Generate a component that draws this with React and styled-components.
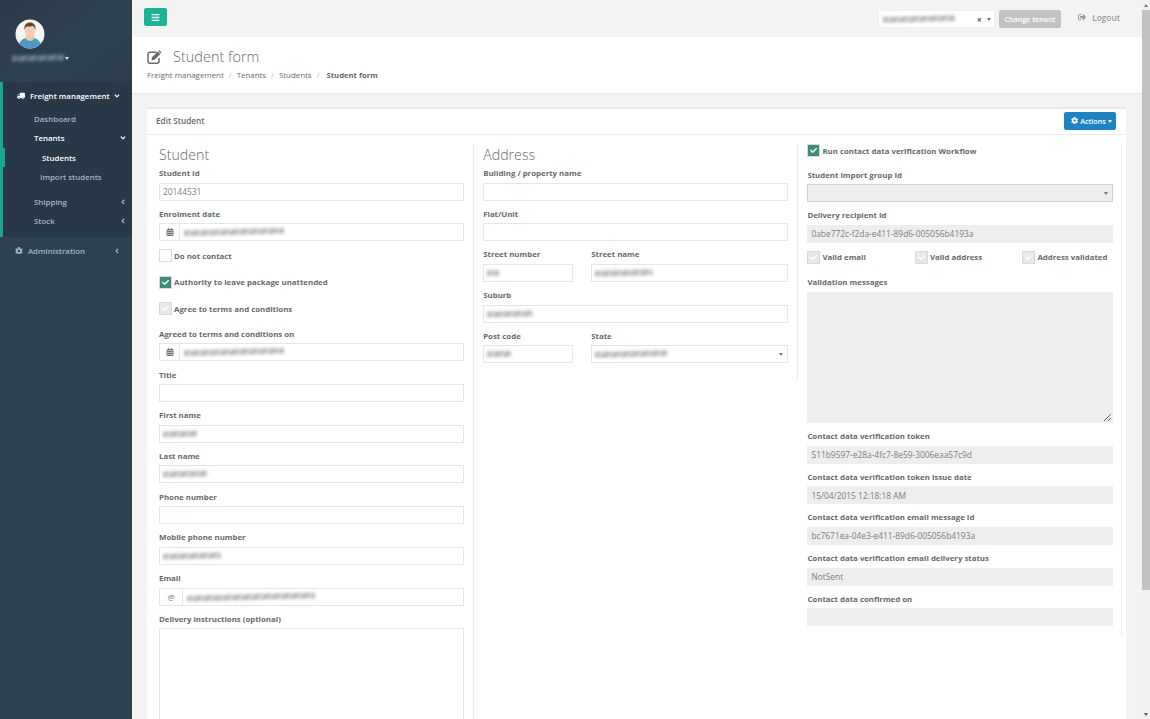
import React from "react";
import styled, { createGlobalStyle } from "styled-components";
import {
  FaAngleDown,
  FaAngleLeft,
  FaBars,
  FaCalendarAlt,
  FaCheck,
  FaCog,
  FaSignOutAlt,
  FaTruck,
} from "react-icons/fa";

const GlobalStyle = createGlobalStyle`
  html, body {
    margin: 0;
    height: 100%;
    overflow: hidden;
    background: #f3f3f4;
    font-family: "Open Sans", "Liberation Sans", sans-serif;
    font-size: 9px;
    color: #676a6c;
  }
  * { box-sizing: border-box; }
`;

const Shell = styled.div`
  display: flex;
  height: 719px;
  overflow: hidden;
`;

const Sidebar = styled.aside`
  width: 132px;
  flex: none;
  background: #2f4050;
`;

const Profile = styled.div`
  height: 82px;
  padding: 19px 0 0 15px;
  background: linear-gradient(145deg, #2a3947 0%, #2f4050 55%, #2c3c4b 100%);
`;

const ProfileName = styled.div`
  display: flex;
  align-items: center;
  gap: 1px;
  margin: 3px 0 0 -3px;
`;

const Smudge = styled.span`
  display: block;
  width: ${(p) => p.$w}px;
  height: 6px;
  flex: none;
  background: repeating-linear-gradient(
    125deg,
    ${(p) => p.$tone || "#bcbcbc"} 0 5px,
    ${(p) => p.$alt || "#d4d4d4"} 5px 8px
  );
  filter: blur(1.5px);
  transform: rotate(-1.5deg);
`;

const ActiveGroup = styled.div`
  background: #293846;
  border-left: 3px solid #19aa8d;
  height: 155px;
  padding-top: 4px;
`;

const NavRow = styled.div`
  display: flex;
  align-items: center;
  justify-content: space-between;
  height: ${(p) => p.$h || 19.3}px;
  margin-left: ${(p) => (p.$bar ? -3 : 0)}px;
  margin-bottom: ${(p) => p.$after || 0}px;
  padding: 0 ${(p) => p.$right ?? 5}px 0 ${(p) => (p.$bar ? p.$left + 3 : p.$left)}px;
  border-left: ${(p) => (p.$bar ? "5px solid #19aa8d" : "none")};
  color: ${(p) => (p.$active ? "#ffffff" : "#a7b1c2")};
  font-size: 7.9px;
  font-weight: 600;
  white-space: nowrap;
`;

const NavLabel = styled.span`
  display: flex;
  align-items: center;
  gap: 5px;
`;

const Main = styled.main`
  flex: 1;
  min-width: 0;
  overflow: hidden;
`;

const TopBar = styled.header`
  display: flex;
  align-items: center;
  height: 37px;
  padding: 0 22px 0 12px;
`;

const MenuButton = styled.button`
  display: flex;
  align-items: center;
  justify-content: center;
  width: 23px;
  height: 18px;
  margin-top: -3px;
  padding: 0;
  border: 1px solid #1ab394;
  border-radius: 2px;
  background: #1ab394;
  color: #fff;
  font-size: 9px;
`;

const TenantSelect = styled.div`
  display: flex;
  align-items: center;
  width: 117px;
  height: 18px;
  margin-left: auto;
  margin-top: 1px;
  padding: 0 3px 0 4px;
  background: #fff;
  border: 1px solid #f0f0f0;
  color: #555;
  font-size: 9px;
`;

const ClearMark = styled.span`
  margin-left: auto;
  margin-right: 5px;
  font-weight: 700;
`;

const Caret = styled.span`
  flex: none;
  width: 0;
  height: 0;
  margin-left: ${(p) => (p.$push ? "auto" : 0)};
  border-left: 2px solid transparent;
  border-right: 2px solid transparent;
  border-top: 3px solid ${(p) => p.$color || "#777"};
`;

const ChangeButton = styled.button`
  width: 62px;
  height: 18px;
  margin-left: 4px;
  margin-top: 1px;
  padding: 0;
  border: 1px solid #c2c2c2;
  border-radius: 2px;
  background: #c2c2c2;
  color: #fff;
  font: 600 7.2px "Open Sans", sans-serif;
`;

const Logout = styled.div`
  display: flex;
  align-items: center;
  gap: 6px;
  margin-left: 17px;
  margin-bottom: 2px;
  color: #999c9e;
  font-size: 8.3px;
  font-weight: 600;
`;

const PageHeading = styled.section`
  height: 57px;
  padding: 11px 0 0 15px;
  background: #fff;
  border-bottom: 1px solid #e7eaec;
`;

const TitleRow = styled.div`
  display: flex;
  align-items: center;
  gap: 11px;
  height: 17px;
`;

const Title = styled.h2`
  margin: 0;
  font-size: 14.5px;
  font-weight: 300;
  color: #676a6c;
`;

const Crumbs = styled.div`
  display: flex;
  gap: 5px;
  margin-top: 4px;
  font-size: 7.9px;
  line-height: 12px;
`;

const CrumbSep = styled.span`
  color: #b5b5b5;
`;

const CurrentCrumb = styled.b`
  margin-left: 2px;
  font-size: 7.7px;
  font-weight: 700;
`;

const Panel = styled.section`
  margin: 13px 16px 0 15px;
  background: #fff;
  border-top: 2px solid #e7eaec;
`;

const PanelHeader = styled.header`
  display: flex;
  align-items: center;
  justify-content: space-between;
  height: 26px;
  padding: 0 10px 1px 9px;
  border-bottom: 1px solid #e7eaec;
  font-size: 8.2px;
  font-weight: 600;
`;

const PanelTitle = styled.span`
  margin-top: -2px;
`;

const ActionsButton = styled.button`
  display: flex;
  align-items: center;
  gap: 2px;
  width: 52px;
  height: 18px;
  padding: 0 0 0 6px;
  border: 1px solid #1c84c6;
  border-radius: 2px;
  background: #1c84c6;
  color: #fff;
  font: 600 7.2px "Open Sans", sans-serif;
`;

const Columns = styled.div`
  display: grid;
  grid-template-columns: repeat(3, 324.2px);
  align-items: start;
  padding: 9px 0 0 2.5px;
`;

const Column = styled.div`
  padding: 0 8.5px ${(p) => p.$bottom || 8}px 9.5px;
  border-right: 1px solid #e7eaec;
`;

const SectionTitle = styled.h3`
  margin: 0;
  height: 24px;
  font-size: 14.2px;
  line-height: 22px;
  font-weight: 300;
  color: #676a6c;
`;

const Field = styled.div`
  margin-bottom: 8.2px;
`;

const Label = styled.label`
  display: block;
  height: 14.5px;
  font-size: 7.85px;
  line-height: 11.5px;
  font-weight: 700;
  color: #676a6c;
  white-space: nowrap;
`;

const Box = styled.div`
  display: flex;
  align-items: center;
  height: 18px;
  padding: 0 4px 0 3px;
  background: ${(p) => (p.$disabled ? "#eeeeee" : "#fff")};
  border: 1px solid ${(p) => p.$edge || (p.$disabled ? "#eeeeee" : "#e5e6e7")};
  font-size: 8.4px;
  color: #7b7d7f;
  white-space: nowrap;
`;

const AddonGroup = styled.div`
  display: flex;
  height: 18px;
  border: 1px solid #e5e6e7;
`;

const Addon = styled.span`
  display: flex;
  align-items: center;
  justify-content: center;
  flex: none;
  width: ${(p) => p.$w}px;
  border-right: 1px solid #e5e6e7;
  color: #777;
  font-size: 8px;
`;

const AddonInput = styled.div`
  display: flex;
  align-items: center;
  flex: 1;
  padding-left: 4px;
`;

const SplitRow = styled.div`
  display: grid;
  grid-template-columns: 90px 197.2px;
  gap: 18px;
`;

const CheckRow = styled.div`
  display: flex;
  align-items: center;
  gap: 2px;
  height: 13px;
  margin-bottom: ${(p) => p.$after ?? 13.5}px;
  font-size: 7.85px;
  font-weight: 700;
  white-space: nowrap;
`;

const CheckBox = styled.span`
  display: flex;
  align-items: center;
  justify-content: center;
  flex: none;
  width: 13px;
  height: 13px;
  color: #fff;
  font-size: 7px;
  background: ${(p) => (p.$kind === "on" ? "#3d8e78" : p.$kind === "off" ? "#e8e8e4" : "#fff")};
  border: 1px solid ${(p) => (p.$kind === "empty" ? "#dcdcdc" : "#d8dcd8")};
`;

const ChecksGrid = styled.div`
  display: grid;
  grid-template-columns: 107.5px 107.5px 1fr;
`;

const TextArea = styled.textarea`
  display: block;
  width: 100%;
  height: ${(p) => p.$h}px;
  margin: 0;
  padding: 4px;
  border: 1px solid ${(p) => (p.disabled ? "#eeeeee" : "#e5e6e7")};
  background: ${(p) => (p.disabled ? "#eeeeee" : "#fff")};
  resize: vertical;
`;

const ScrollBar = styled.div`
  display: flex;
  flex-direction: column;
  align-items: center;
  flex: none;
  width: 8px;
  background: #f1f1f1;
`;

const ScrollArrow = styled.span`
  display: flex;
  align-items: center;
  justify-content: center;
  height: 10px;
  flex: none;
`;

const ScrollUp = styled.span`
  width: 0;
  height: 0;
  border-left: 2px solid transparent;
  border-right: 2px solid transparent;
  border-bottom: 3px solid #777;
`;

const ScrollThumb = styled.span`
  width: 100%;
  height: 580px;
  flex: none;
  background: #c1c1c1;
`;

const ScrollRest = styled.span`
  flex: 1;
`;

const AvatarSvg = () => (
  <svg width="30" height="30" viewBox="0 0 30 30">
    <defs>
      <clipPath id="avatar-clip">
        <circle cx="15" cy="15" r="14.5" />
      </clipPath>
    </defs>
    <circle cx="15" cy="15" r="14.5" fill="#f4f4f2" />
    <g clipPath="url(#avatar-clip)">
      <path d="M3 31c0-8 4-11 8-12l4 2 4-2c4 1 8 4 8 12z" fill="#4a9ac9" />
      <path d="M11 15h8v4c0 2-2 3-4 3s-4-1-4-3z" fill="#efc5a4" />
      <ellipse cx="15" cy="11.5" rx="5.2" ry="6.2" fill="#f3cfb0" />
      <path d="M9.5 11c-.8-5 2-7.5 5.5-7.5s6.3 2.5 5.5 7.5c-.6-2.5-1.6-3.6-3-4-2 .8-5 .6-6 .6-1 .8-1.6 2-2 3.4z" fill="#6b4426" />
    </g>
  </svg>
);

// open square with a solid pencil, like the old font-awesome edit glyph
const EditIcon = () => (
  <svg width="15" height="14" viewBox="0 0 15 14">
    <path
      d="M9.5 2.2H3a2 2 0 0 0-2 2v7.6a1.4 1.4 0 0 0 1.4 1.4h7.6a2 2 0 0 0 2-2V8"
      fill="none"
      stroke="#676a6c"
      strokeWidth="1.5"
    />
    <path d="M5 7.2 10.8 1.4l2.6 2.6L7.6 9.8 4.6 10.4z" fill="#676a6c" />
    <path d="M11.6.7a.9.9 0 0 1 1.3 0l1.2 1.2a.9.9 0 0 1 0 1.3l-.3.3-2.5-2.5z" fill="#676a6c" />
  </svg>
);

const TextField = ({ label, value, blur, disabled, edge, caret }) => (
  <Field>
    <Label>{label}</Label>
    <Box $disabled={disabled} $edge={edge}>
      {blur ? <Smudge $w={blur} /> : value}
      {caret && <Caret $push />}
    </Box>
  </Field>
);

const AddonField = ({ label, addon, width, blur }) => (
  <Field>
    <Label>{label}</Label>
    <AddonGroup>
      <Addon $w={width}>{addon}</Addon>
      <AddonInput>
        <Smudge $w={blur} />
      </AddonInput>
    </AddonGroup>
  </Field>
);

const Check = ({ kind, after, children }) => (
  <CheckRow $after={after}>
    <CheckBox $kind={kind}>{kind !== "empty" && <FaCheck />}</CheckBox>
    {children}
  </CheckRow>
);

export default function App() {
  return (
    <Shell>
      <GlobalStyle />
      <Sidebar>
        <Profile>
          <AvatarSvg />
          <ProfileName>
            <Smudge $w={52} $tone="#6f7e8d" $alt="#54667a" />
            <Caret $color="#dfe4ed" />
          </ProfileName>
        </Profile>
        <ActiveGroup>
          <NavRow $active $left={14} $right={11} $h={20} $after={3.3}>
            <NavLabel>
              <FaTruck style={{ transform: "scaleX(-1)" }} />
              Freight management
            </NavLabel>
            <FaAngleDown />
          </NavRow>
          <NavRow $left={31}>Dashboard</NavRow>
          <NavRow $active $left={31}>
            Tenants
            <FaAngleDown />
          </NavRow>
          <NavRow $active $bar $left={34}>Students</NavRow>
          <NavRow $left={37} $after={5.7}>Import students</NavRow>
          <NavRow $left={31}>
            Shipping
            <FaAngleLeft />
          </NavRow>
          <NavRow $left={31}>
            Stock
            <FaAngleLeft />
          </NavRow>
        </ActiveGroup>
        <NavRow $left={15} $right={11} $h={27}>
          <NavLabel>
            <FaCog />
            Administration
          </NavLabel>
          <FaAngleLeft />
        </NavRow>
      </Sidebar>

      <Main>
        <TopBar>
          <MenuButton aria-label="Menu">
            <FaBars />
          </MenuButton>
          <TenantSelect>
            <Smudge $w={72} />
            <ClearMark>×</ClearMark>
            <Caret />
          </TenantSelect>
          <ChangeButton>Change tenant</ChangeButton>
          <Logout>
            <FaSignOutAlt />
            Logout
          </Logout>
        </TopBar>

        <PageHeading>
          <TitleRow>
            <EditIcon />
            <Title>Student form</Title>
          </TitleRow>
          <Crumbs>
            <span>Freight management</span>
            <CrumbSep>/</CrumbSep>
            <span>Tenants</span>
            <CrumbSep>/</CrumbSep>
            <span>Students</span>
            <CrumbSep>/</CrumbSep>
            <CurrentCrumb>Student form</CurrentCrumb>
          </Crumbs>
        </PageHeading>

        <Panel>
          <PanelHeader>
            <PanelTitle>Edit Student</PanelTitle>
            <ActionsButton>
              <FaCog />
              Actions
              <Caret $color="#fff" />
            </ActionsButton>
          </PanelHeader>
          <Columns>
            <Column>
              <SectionTitle>Student</SectionTitle>
              <TextField label="Student Id" value="20144531" />
              <AddonField label="Enrolment date" addon={<FaCalendarAlt />} width={20} blur={100} />
              <Check kind="empty">Do not contact</Check>
              <Check kind="on">Authority to leave package unattended</Check>
              <Check kind="off">Agree to terms and conditions</Check>
              <AddonField label="Agreed to terms and conditions on" addon={<FaCalendarAlt />} width={20} blur={100} />
              <TextField label="Title" />
              <TextField label="First name" blur={34} />
              <TextField label="Last name" blur={44} />
              <TextField label="Phone number" />
              <TextField label="Mobile phone number" blur={58} />
              <AddonField label="Email" addon="@" width={23} blur={128} />
              <Field>
                <Label>Delivery instructions (optional)</Label>
                <TextArea readOnly $h={200} />
              </Field>
            </Column>

            <Column>
              <SectionTitle>Address</SectionTitle>
              <TextField label="Building / property name" />
              <TextField label="Flat/Unit" />
              <SplitRow>
                <TextField label="Street number" blur={12} />
                <TextField label="Street name" blur={58} />
              </SplitRow>
              <TextField label="Suburb" blur={46} />
              <SplitRow>
                <TextField label="Post code" blur={24} />
                <TextField label="State" blur={72} caret />
              </SplitRow>
            </Column>

            <Column $bottom={1}>
              <Check kind="on" after={12.5}>Run contact data verification Workflow</Check>
              <TextField label="Student import group Id" disabled edge="#d0d0d0" caret />
              <TextField label="Delivery recipient Id" value="0abe772c-f2da-e411-89d6-005056b4193a" disabled />
              <ChecksGrid>
                <Check kind="off">Valid email</Check>
                <Check kind="off">Valid address</Check>
                <Check kind="off">Address validated</Check>
              </ChecksGrid>
              <Field>
                <Label>Validation messages</Label>
                <TextArea disabled $h={131} />
              </Field>
              <TextField label="Contact data verification token" value="511b9597-e28a-4fc7-8e59-3006eaa57c9d" disabled />
              <TextField label="Contact data verification token issue date" value="15/04/2015 12:18:18 AM" disabled />
              <TextField label="Contact data verification email message Id" value="bc7671ea-04e3-e411-89d6-005056b4193a" disabled />
              <TextField label="Contact data verification email delivery status" value="NotSent" disabled />
              <TextField label="Contact data confirmed on" disabled />
            </Column>
          </Columns>
        </Panel>
      </Main>

      <ScrollBar>
        <ScrollArrow>
          <ScrollUp />
        </ScrollArrow>
        <ScrollThumb />
        <ScrollRest />
        <ScrollArrow>
          <Caret $color="#555" />
        </ScrollArrow>
      </ScrollBar>
    </Shell>
  );
}
